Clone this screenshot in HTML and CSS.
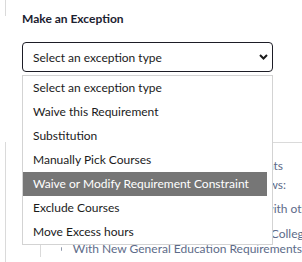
FILE: index.html
```html
<!DOCTYPE html>
<html lang="en">
<head>
    <meta charset="UTF-8">
    <title>Make an Exception</title>
    <link rel="stylesheet" href="styles.css">
</head>
<body>
    <div class="page">
        <!-- end of the block above -->
        <div class="prev-block"></div>

        <!-- exception picker -->
        <section class="exception">
            <h3 class="exception-title">Make an Exception</h3>
            <div class="picker">
                <div class="picker-box">
                    <span>Select an exception type</span>
                    <svg class="picker-arrow" width="9" height="6" viewBox="0 0 9 6">
                        <polyline points="1,1 4.5,4.5 8,1" fill="none" stroke="#1b1b1b" stroke-width="2"/>
                    </svg>
                </div>
                <ul class="picker-list">
                    <li>Select an exception type</li>
                    <li>Waive this Requirement</li>
                    <li>Substitution</li>
                    <li>Manually Pick Courses</li>
                    <li class="is-hover">Waive or Modify Requirement Constraint</li>
                    <li>Exclude Courses</li>
                    <li>Move Excess hours</li>
                </ul>
            </div>
        </section>

        <!-- rule details behind the menu -->
        <div class="rules">
            <div class="rule-card">
                <p class="rule-text">
                    <span class="line line-1">Applies to courses in these requirements</span>
                    <span class="line line-2">Exceptions will be handled as follows:</span>
                </p>
                <ul class="rule-list">
                    <li class="line line-3">Shared courses may not be used with other</li>
                    <li class="line line-4">Transfer work from Lone Star College</li>
                </ul>
                <ul class="sub-list">
                    <li>With New General Education Requirements</li>
                </ul>
            </div>
        </div>
    </div>
</body>
</html>
```

FILE: styles.css
```css
*{
    box-sizing: border-box;
}
body{
    margin: 0px;
    width: 302px;
    height: 262px;
    overflow: hidden;
    background: #fff;
    font-family: Lato, "Open Sans", sans-serif;
    font-size: 12px;
    color: #222;
}
.prev-block{
    margin-left: 5px;
    height: 16px;
    border-left: 1px solid #dadada;
}
/* picker */
.exception{
    margin-top: -5px;
    padding-left: 22px;
}
.exception-title{
    margin: 0;
    font-size: 12px;
    font-weight: 700;
    line-height: 16px;
    color: #1c2230;
}
.picker{
    position: relative;
    width: 251px;
    margin-top: 15px;
}
.picker-box{
    display: flex;
    align-items: center;
    justify-content: space-between;
    height: 30px;
    padding: 0 4px 0 10px;
    border: 1px solid #1d1d26;
    border-radius: 4px;
    color: #1b1b1b;
}
.picker-list{
    position: absolute;
    top: 33px;
    left: 0;
    z-index: 2;
    width: 251px;
    margin: 0;
    padding: 0 5px 0 0;
    list-style: none;
    background: #fff;
    border: 1px solid #d3d3d3;
    color: #1b1b1b;
}
.picker-list li{
    height: 24px;
    line-height: 24px;
    padding-left: 10px;
    white-space: nowrap;
}
.picker-list .is-hover{
    background: #767676;
    color: #fff;
}
/* rules behind */
.rules{
    margin: 70px 0 0 5px;
    height: 140px;
    border-left: 1px solid #dadada;
}
.rule-card{
    margin: 2px 0 0 20px;
    border-top: 1px solid #dadada;
    color: #5d6b89;
    white-space: nowrap;
}
.rule-text{
    margin: 13px 0 0 0;
    line-height: 19px;
}
.line{
    display: block;
    text-align: right;
}
.line-1{ width: 257px; }
.line-2{ width: 260px; }
.rule-list{
    margin: 3px 0 0 0;
    padding: 0;
    list-style: none;
}
.rule-list li{
    padding: 4px 0;
    line-height: 16px;
}
.rule-list .line-3{
    width: 293px;
    padding-bottom: 5px;
}
.line-4{ width: 284px; }
.sub-list{
    margin: -7px 0 0 14px;
    padding: 2px 0 0 0;
    list-style: none;
    border-left: 1px solid #dadada;
}
.sub-list li{
    display: flex;
    align-items: center;
    gap: 11px;
    padding-left: 20px;
    line-height: 16px;
}
.sub-list li::before{
    content: "";
    width: 4px;
    height: 4px;
    border-radius: 50%;
    background: #8a93a6;
}
```
